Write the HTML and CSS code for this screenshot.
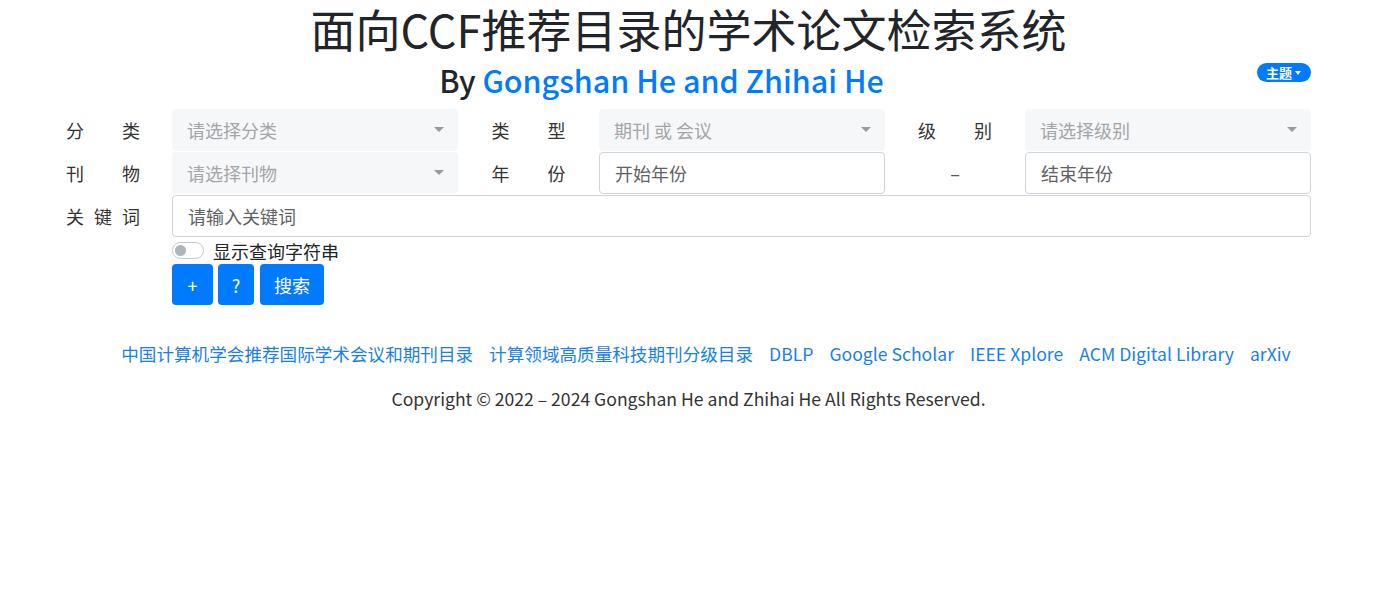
FILE: index.html
```html
<!DOCTYPE html>
<html lang="zh-CN">
<head>
<meta charset="utf-8">
<title>面向CCF推荐目录的学术论文检索系统</title>
<link rel="stylesheet" href="styles.css">
</head>
<body>
<div class="page">
  <h1 class="title">面向CCF推荐目录的学术论文检索系统</h1>
  <div class="subrow">
    <h2 class="subtitle">By <a href="#">Gongshan He and Zhihai He</a></h2>
    <button class="theme-btn">主题<span class="caret"></span></button>
  </div>

  <div class="form-grid">
    <div class="lbl first"><span>分类</span></div>
    <div class="select disabled">请选择分类<span class="arrow"></span></div>
    <div class="lbl"><span>类型</span></div>
    <div class="select disabled">期刊 或 会议<span class="arrow"></span></div>
    <div class="lbl"><span>级别</span></div>
    <div class="select disabled">请选择级别<span class="arrow"></span></div>

    <div class="lbl first"><span>刊物</span></div>
    <div class="select disabled">请选择刊物<span class="arrow"></span></div>
    <div class="lbl"><span>年份</span></div>
    <div class="input">开始年份</div>
    <div class="lbl dash">–</div>
    <div class="input">结束年份</div>

    <div class="lbl first"><span>关键词</span></div>
    <div class="input wide">请输入关键词</div>
  </div>

  <div class="actions">
    <label class="switch"><span class="track"><span class="knob"></span></span>显示查询字符串</label>
    <div class="btns">
      <button class="btn plus">+</button>
      <button class="btn q">?</button>
      <button class="btn search">搜索</button>
    </div>
  </div>

  <nav class="links">
    <a href="#">中国计算机学会推荐国际学术会议和期刊目录</a>
    <a href="#">计算领域高质量科技期刊分级目录</a>
    <a href="#">DBLP</a>
    <a href="#">Google Scholar</a>
    <a href="#">IEEE Xplore</a>
    <a href="#">ACM Digital Library</a>
    <a href="#">arXiv</a>
  </nav>

  <p class="copyright">Copyright © 2022 – 2024 Gongshan He and Zhihai He All Rights Reserved.</p>
</div>
</body>
</html>
```

FILE: styles.css
```css
* { box-sizing: border-box; }
html, body { margin: 0; padding: 0; background: #fff; }
body {
  font-family: "Noto Sans CJK SC", "Noto Sans", sans-serif;
  color: #212529;
}
.page {
  width: 1245px;
  margin-left: 66px;
}
.title {
  margin: 0;
  padding-top: 0;
  font-size: 45px;
  font-weight: 400;
  line-height: 58px;
  height: 58px;
  text-align: center;
  color: #212529;
}
.subrow {
  display: flex;
  align-items: center;
  height: 51px;
}
.subtitle {
  flex: 1;
  margin: 0;
  margin-top: -7px;
  text-align: center;
  font-size: 30.5px;
  font-weight: 500;
  line-height: 40px;
}
.subtitle a { color: #007bff; text-decoration: none; }
.theme-btn {
  display: flex;
  align-items: center;
  height: 19px;
  padding: 0 10px 0 9px;
  border: none;
  border-radius: 10px;
  background: #007bff;
  color: #fff;
  font-family: inherit;
  font-size: 13px;
  font-weight: 700;
  line-height: 19px;
  margin-top: -22px;
}
.caret {
  display: inline-block;
  margin-left: 3px;
  border-left: 3.5px solid transparent;
  border-right: 3.5px solid transparent;
  border-top: 4px solid #fff;
}
.form-grid {
  display: grid;
  grid-template-columns: 106px 286px 141px 286px 140px 286px;
  grid-auto-rows: 42px;
  row-gap: 1px;
}
.lbl {
  display: flex;
  align-items: center;
  justify-content: center;
  font-size: 18px;
  color: #333;
}
.lbl span {
  display: block;
  width: 74px;
  text-align: justify;
  text-align-last: justify;
}
.lbl.first { justify-content: flex-start; }
.lbl.dash { color: #555; }
.select, .input {
  position: relative;
  display: flex;
  align-items: center;
  padding-left: 15px;
  font-size: 18px;
  border-radius: 4px;
}
.select.disabled {
  background: #f6f7f8;
  color: #a3a6a9;
}
.arrow {
  position: absolute;
  right: 14px;
  top: 18px;
  border-left: 5px solid transparent;
  border-right: 5px solid transparent;
  border-top: 5px solid #9a9a9a;
}
.input {
  border: 1px solid #ced4da;
  color: #5f6265;
  background: #fff;
}
.input.wide { grid-column: 2 / 7; }
.actions {
  margin-left: 106px;
  padding-top: 4px;
}
.switch {
  display: flex;
  align-items: center;
  height: 19px;
  font-size: 18px;
  color: #212529;
}
.track {
  position: relative;
  display: inline-block;
  width: 32px;
  height: 17px;
  border: 1px solid #c3c8cd;
  border-radius: 9px;
  background: #fff;
  margin-right: 9px;
}
.knob {
  position: absolute;
  left: 2px;
  top: 2px;
  width: 11px;
  height: 11px;
  border-radius: 50%;
  background: #adb5bd;
}
.btns {
  display: flex;
  gap: 5px;
  margin-top: 4px;
}
.btn {
  height: 41px;
  border: none;
  border-radius: 4px;
  background: #007bff;
  color: #fff;
  font-family: inherit;
  font-size: 18px;
  padding: 0;
}
.btn.plus { width: 41px; }
.btn.q { width: 36px; }
.btn.search { width: 64px; margin-left: 1px; }
.links {
  display: flex;
  justify-content: center;
  gap: 16px;
  margin-top: 37px;
  padding-left: 35px;
  font-size: 17.6px;
  line-height: 24px;
}
.links a { color: #1a7fe6; text-decoration: none; }
.copyright {
  margin: 21px 0 0;
  text-align: center;
  font-size: 17.6px;
  line-height: 24px;
  color: #333;
}
```
